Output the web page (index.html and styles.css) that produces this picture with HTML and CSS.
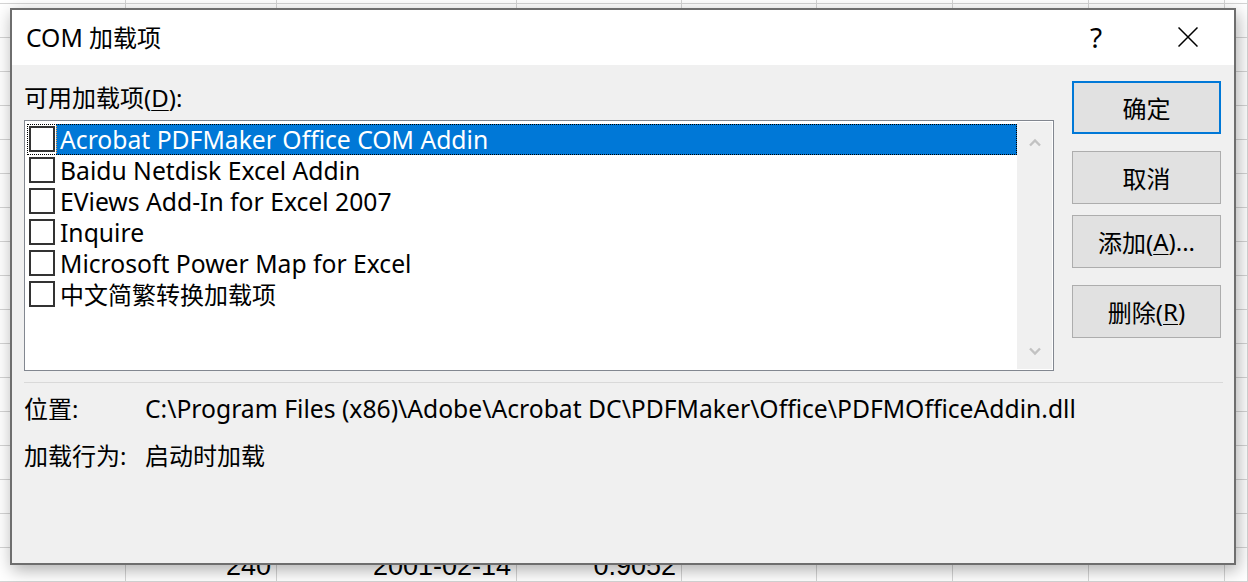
FILE: index.html
```html
<!DOCTYPE html>
<html lang="zh-CN">
<head>
<meta charset="utf-8">
<title>COM 加载项</title>
<link rel="stylesheet" href="styles.css">
</head>
<body>
<div class="sheet">
  <div class="row row-top"><span></span><span></span><span></span><span></span><span></span><span></span><span></span><span></span><span></span></div>
  <div class="row"><span></span><span></span><span></span><span></span><span></span><span></span><span></span><span></span><span></span></div>
  <div class="row"><span></span><span></span><span></span><span></span><span></span><span></span><span></span><span></span><span></span></div>
  <div class="row"><span></span><span></span><span></span><span></span><span></span><span></span><span></span><span></span><span></span></div>
  <div class="row"><span></span><span></span><span></span><span></span><span></span><span></span><span></span><span></span><span></span></div>
  <div class="row"><span></span><span></span><span></span><span></span><span></span><span></span><span></span><span></span><span></span></div>
  <div class="row"><span></span><span></span><span></span><span></span><span></span><span></span><span></span><span></span><span></span></div>
  <div class="row"><span></span><span></span><span></span><span></span><span></span><span></span><span></span><span></span><span></span></div>
  <div class="row"><span></span><span></span><span></span><span></span><span></span><span></span><span></span><span></span><span></span></div>
  <div class="row"><span></span><span></span><span></span><span></span><span></span><span></span><span></span><span></span><span></span></div>
  <div class="row"><span></span><span></span><span></span><span></span><span></span><span></span><span></span><span></span><span></span></div>
  <div class="row"><span></span><span></span><span></span><span></span><span></span><span></span><span></span><span></span><span></span></div>
  <div class="row"><span></span><span></span><span></span><span></span><span></span><span></span><span></span><span></span><span></span></div>
  <div class="row"><span></span><span></span><span></span><span></span><span></span><span></span><span></span><span></span><span></span></div>
  <div class="row"><span></span><span></span><span></span><span></span><span></span><span></span><span></span><span></span><span></span></div>
  <div class="row"><span></span><span></span><span></span><span></span><span></span><span></span><span></span><span></span><span></span></div>
  <div class="row"><span></span><span></span><span></span><span></span><span></span><span></span><span></span><span></span><span></span></div>
  <div class="row"><span></span><span class="num">240</span><span class="num">2001-02-14</span><span class="num">0.9052</span><span></span><span></span><span></span><span></span><span></span></div>
</div>

<div class="dialog">
  <div class="titlebar">
    <div class="title"><span class="latin">COM</span> 加载项</div>
    <div class="tbtn help">?</div>
    <div class="tbtn close">
      <svg width="20" height="20" viewBox="0 0 20 20"><path d="M0.5 0.5L19.5 19.5M19.5 0.5L0.5 19.5" stroke="#000" stroke-width="1.5" fill="none"/></svg>
    </div>
  </div>
  <div class="body">
    <div class="main">
      <div class="left">
        <div class="label">可用加载项(<u>D</u>):</div>
        <div class="listbox">
          <div class="items">
            <div class="item selected"><span class="check"></span><span class="text">Acrobat PDFMaker Office COM Addin</span></div>
            <div class="item"><span class="check"></span><span class="text">Baidu Netdisk Excel Addin</span></div>
            <div class="item"><span class="check"></span><span class="text">EViews Add-In for Excel 2007</span></div>
            <div class="item"><span class="check"></span><span class="text">Inquire</span></div>
            <div class="item"><span class="check"></span><span class="text">Microsoft Power Map for Excel</span></div>
            <div class="item"><span class="check"></span><span class="text text-cjk">中文简繁转换加载项</span></div>
          </div>
          <div class="scrollbar">
            <svg class="arrow" width="12" height="9" viewBox="0 0 12 9"><path d="M1 7.5L6 2.5L11 7.5" stroke="#c2c2c2" stroke-width="2.4" fill="none"/></svg>
            <svg class="arrow" width="12" height="9" viewBox="0 0 12 9"><path d="M1 1.5L6 6.5L11 1.5" stroke="#c2c2c2" stroke-width="2.4" fill="none"/></svg>
          </div>
        </div>
      </div>
      <div class="buttons">
        <div class="btn btn-default">确定</div>
        <div class="btn btn-cancel">取消</div>
        <div class="btn btn-add">添加(<u>A</u>)...</div>
        <div class="btn btn-remove">删除(<u>R</u>)</div>
      </div>
    </div>
    <div class="sep"></div>
    <div class="info">
      <div class="key">位置:</div>
      <div class="val val-path">C:\Program Files (x86)\Adobe\Acrobat DC\PDFMaker\Office\PDFMOfficeAddin.dll</div>
      <div class="key">加载行为:</div>
      <div class="val">启动时加载</div>
    </div>
  </div>
</div>
</body>
</html>
```

FILE: styles.css
```css
* { box-sizing: border-box; }

html, body {
  margin: 0;
  padding: 0;
}

body {
  width: 1248px;
  height: 582px;
  overflow: hidden;
  position: relative;
  background: #ffffff;
  font-family: "Noto Sans", "Noto Sans CJK SC", sans-serif;
  color: #000;
}

/* ---------- spreadsheet background ---------- */
.sheet {
  display: flex;
  flex-direction: column;
}

.row {
  display: flex;
  height: 34px;
}

.row-top {
  height: 4px;
}

.row > span {
  border-right: 1px solid #d4d4d4;
  border-bottom: 1px solid #d4d4d4;
  flex: none;
}

.row > span:nth-child(1) { width: 126px; }
.row > span:nth-child(2) { width: 151px; }
.row > span:nth-child(3) { width: 240px; }
.row > span:nth-child(4) { width: 165px; }
.row > span:nth-child(5) { width: 135px; }
.row > span:nth-child(6) { width: 136px; }
.row > span:nth-child(7) { width: 136px; }
.row > span:nth-child(8) { width: 136px; }
.row > span:nth-child(9) { width: 23px; }

.row > .num {
  display: flex;
  align-items: flex-end;
  justify-content: flex-end;
  padding: 0 5px 1px 0;
  font-family: "Liberation Sans", Arial, sans-serif;
  font-size: 27px;
  line-height: 27px;
  color: #000;
}

/* ---------- dialog window ---------- */
.dialog {
  position: absolute;
  left: 10px;
  top: 8px;
  width: 1226px;
  height: 557px;
  border: 2px solid #6e6e6e;
  background: #f0f0f0;
  box-shadow: 2px 5px 16px rgba(0, 0, 0, 0.32);
  display: flex;
  flex-direction: column;
}

.titlebar {
  height: 55px;
  background: #ffffff;
  display: flex;
  align-items: stretch;
  flex: none;
}

.title {
  flex: 1;
  padding-left: 14px;
  font-size: 24px;
  line-height: 55px;
  white-space: nowrap;
}

.latin {
  font-size: 24.7px;
}

.tbtn {
  width: 92px;
  display: flex;
  align-items: center;
  justify-content: center;
}

.help {
  font-size: 28px;
  line-height: 1;
  padding-bottom: 2px;
}

.close svg {
  display: block;
  margin-top: -1px;
}

.body {
  flex: 1;
  padding: 16px 13px 0 12px;
  font-size: 24px;
}

.main {
  display: flex;
  gap: 18px;
  align-items: flex-start;
}

.left {
  width: 1030px;
  flex: none;
}

.label {
  height: 34px;
  line-height: 34px;
  margin-bottom: 5px;
  white-space: nowrap;
}

u {
  text-decoration-thickness: 1px;
  text-underline-offset: 3px;
}

.listbox {
  height: 251px;
  border: 1px solid #828790;
  padding: 1px;
  background: #ffffff;
  display: flex;
}

.items {
  flex: 1;
  padding: 2px 0 0 1px;
}

.item {
  height: 31px;
  display: flex;
  align-items: flex-start;
}

.item.selected {
  outline: 1px dotted #000;
  outline-offset: -1px;
}

.check {
  width: 26px;
  height: 26px;
  margin: 2px 0 0 2px;
  border: 2px solid #333333;
  background: #ffffff;
  flex: none;
}

.text {
  flex: 1;
  height: 31px;
  margin-left: 1px;
  padding-left: 4px;
  font-size: 24.7px;
  line-height: 31px;
  white-space: nowrap;
}

.text-cjk {
  font-size: 24px;
}

.item.selected .text {
  background: #0078d7;
  color: #ffffff;
  outline: 1px dotted #f2a24e;
  outline-offset: -1px;
}

.scrollbar {
  width: 35px;
  flex: none;
  background: #f0f0f0;
  display: flex;
  flex-direction: column;
  align-items: center;
  justify-content: space-between;
  padding: 16px 0 13px 0;
}

.arrow {
  display: block;
}

.buttons {
  width: 149px;
  flex: none;
  display: flex;
  flex-direction: column;
}

.btn {
  height: 53px;
  border: 1px solid #adadad;
  background: #e1e1e1;
  display: flex;
  align-items: center;
  justify-content: center;
  font-size: 24px;
  white-space: nowrap;
}

.btn-default {
  border: 2px solid #0078d7;
}

.btn-cancel { margin-top: 17px; }
.btn-add { margin-top: 11px; }
.btn-remove { margin-top: 17px; }

.sep {
  width: 1199px;
  height: 1px;
  background: #d9d9d9;
  margin-top: 11px;
}

.info {
  margin-top: 10px;
  display: grid;
  grid-template-columns: 121px 1fr;
  row-gap: 15px;
  line-height: 32px;
  white-space: nowrap;
}

.val-path {
  font-size: 24.7px;
}
```
